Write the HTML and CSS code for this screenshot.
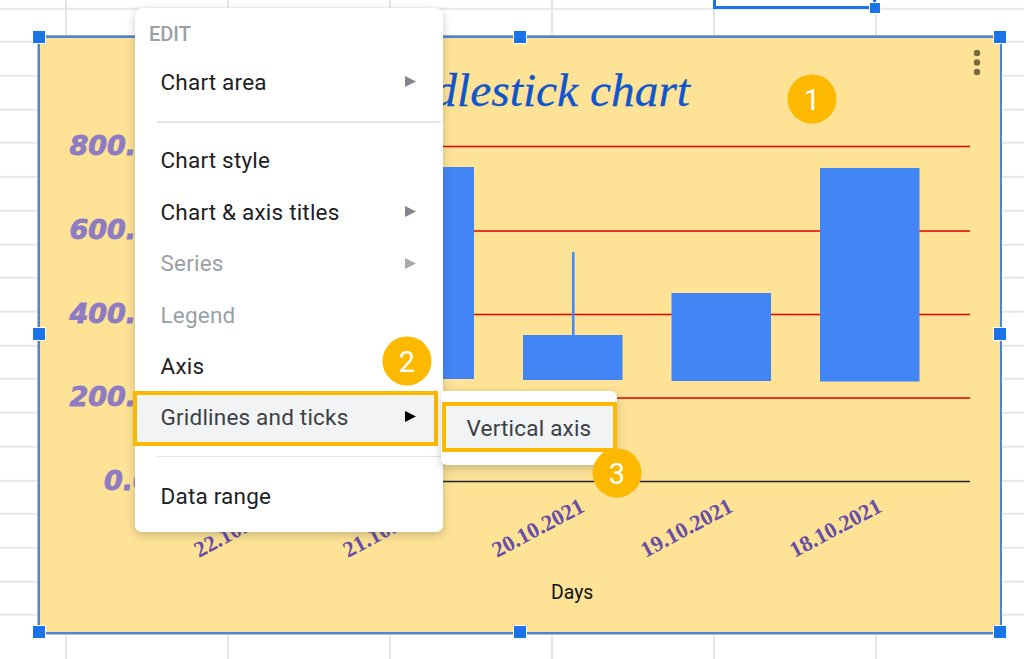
FILE: index.html
```html
<!DOCTYPE html>
<html lang="en">
<head>
<meta charset="utf-8">
<title>Candlestick chart</title>
<link rel="stylesheet" href="styles.css">
</head>
<body>
<main class="sheet">
  <div class="cell-selection"></div>
  <span class="handle cell-handle"></span>

  <section class="chart">
    <svg class="chart-svg" viewBox="38 37 962 595" width="962" height="595" aria-label="Candlestick chart">
      <text class="title" x="690" y="106" text-anchor="end">Candlestick chart</text>
      <line class="grid-red" x1="140" x2="970" y1="146.5" y2="146.5"/>
      <line class="grid-red" x1="140" x2="970" y1="231" y2="231"/>
      <line class="grid-red" x1="140" x2="970" y1="314.5" y2="314.5"/>
      <line class="grid-red" x1="140" x2="970" y1="398" y2="398"/>
      <line class="grid-black" x1="140" x2="970" y1="481.5" y2="481.5"/>
      <rect class="bar" x="374" y="167" width="100" height="212"/>
      <rect class="bar" x="523" y="335" width="99.5" height="45"/>
      <rect class="bar" x="572" y="252" width="2.5" height="84"/>
      <rect class="bar" x="671.5" y="293" width="99.5" height="88"/>
      <rect class="bar" x="820" y="168" width="99.5" height="213.5"/>
      <text class="y-label" x="69.5" y="155">800.0</text>
      <text class="y-label" x="69.5" y="239">600.0</text>
      <text class="y-label" x="69.5" y="323">400.0</text>
      <text class="y-label" x="69.5" y="406">200.0</text>
      <text class="y-label" x="104" y="490">0.0</text>
      <text class="x-label" transform="translate(199 558) rotate(-28)">22.10.2021</text>
      <text class="x-label" transform="translate(348 558) rotate(-28)">21.10.2021</text>
      <text class="x-label" transform="translate(497 558) rotate(-28)">20.10.2021</text>
      <text class="x-label" transform="translate(645.5 558) rotate(-28)">19.10.2021</text>
      <text class="x-label" transform="translate(794.5 558) rotate(-28)">18.10.2021</text>
      <text class="x-title" x="551" y="599">Days</text>
      <circle class="kebab" cx="977" cy="53" r="3.2"/>
      <circle class="kebab" cx="977" cy="62.5" r="3.2"/>
      <circle class="kebab" cx="977" cy="72" r="3.2"/>
    </svg>
  </section>

  <span class="handle h-tl"></span>
  <span class="handle h-tc"></span>
  <span class="handle h-tr"></span>
  <span class="handle h-ml"></span>
  <span class="handle h-mr"></span>
  <span class="handle h-bl"></span>
  <span class="handle h-bc"></span>
  <span class="handle h-br"></span>

  <nav class="menu">
    <div class="menu-head">EDIT</div>
    <div class="item"><span>Chart area</span>
      <svg class="arrow" viewBox="0 0 11 11" width="11" height="11"><polygon points="0,0 11,5.5 0,11"/></svg></div>
    <div class="sep"></div>
    <div class="item"><span>Chart style</span></div>
    <div class="item"><span>Chart &amp; axis titles</span>
      <svg class="arrow" viewBox="0 0 11 11" width="11" height="11"><polygon points="0,0 11,5.5 0,11"/></svg></div>
    <div class="item disabled"><span>Series</span>
      <svg class="arrow" viewBox="0 0 11 11" width="11" height="11"><polygon points="0,0 11,5.5 0,11"/></svg></div>
    <div class="item disabled"><span>Legend</span></div>
    <div class="item"><span>Axis</span></div>
    <div class="item active"><span>Gridlines and ticks</span>
      <svg class="arrow" viewBox="0 0 11 11" width="11" height="11"><polygon points="0,0 11,5.5 0,11"/></svg></div>
    <div class="sep thin"></div>
    <div class="item"><span>Data range</span></div>
  </nav>

  <nav class="submenu">
    <div class="sub-item">Vertical axis</div>
  </nav>

  <span class="badge b1">1</span>
  <span class="badge b2">2</span>
  <span class="badge b3">3</span>
</main>
</body>
</html>
```
FILE: styles.css
```css
* { box-sizing: border-box; }
html, body { margin: 0; padding: 0; }
body { width: 1024px; height: 659px; overflow: hidden; background: #fff; }

.sheet {
  position: relative;
  width: 1024px;
  height: 659px;
  background-color: #fff;
  background-image:
    repeating-linear-gradient(to right, transparent 0, transparent 160px, #e6e6e6 160px, #e6e6e6 162px),
    repeating-linear-gradient(to bottom, transparent 0, transparent 31.7px, #e6e6e6 31.7px, #e6e6e6 33.7px);
  background-position: -95px 0, 0 -24.3px;
}

.cell-selection {
  position: absolute;
  left: 713px;
  top: -4px;
  width: 163px;
  height: 13px;
  border: 3px solid #1a73e8;
}

.handle {
  position: absolute;
  width: 14px;
  height: 14px;
  background: #1a73e8;
  border: 1px solid #fff;
  transform: translate(-50%, -50%);
}
.cell-handle { left: 875px; top: 8px; width: 12px; height: 12px; }
.h-tl { left: 38.5px; top: 37px; }
.h-tc { left: 519.5px; top: 37px; }
.h-tr { left: 1000px; top: 37px; }
.h-ml { left: 38.5px; top: 334px; }
.h-mr { left: 1000px; top: 334px; }
.h-bl { left: 38.5px; top: 632px; }
.h-bc { left: 519.5px; top: 632px; }
.h-br { left: 1000px; top: 632px; }

.chart {
  position: absolute;
  left: 38px;
  top: 36px;
  width: 964px;
  height: 598px;
  background: #fee295;
  border: 2.5px solid #4a86d8;
  box-shadow: 0 -1px 0 #9aa0a6, -1px 0 0 #b9bdc2, 0 1px 0 #b9bdc2;
}
.chart-svg { position: absolute; left: -2.5px; top: -1.5px; display: block; overflow: visible; }

.title { font: italic 47.4px "Liberation Serif", serif; fill: #1155cc; stroke: #1155cc; stroke-width: 0.3px; }
.grid-red { stroke: #e00000; stroke-width: 1.3; }
.grid-black { stroke: #222; stroke-width: 1.3; }
.bar { fill: #4285f4; }
.y-label { font: italic bold 27px "DejaVu Sans", sans-serif; fill: #8e7cc3; stroke: #8e7cc3; stroke-width: 0.9px; }
.x-label { font: bold 22.4px "Liberation Serif", serif; fill: #674ea7; }
.x-title { font: 19.4px Roboto, sans-serif; fill: #111; }
.kebab { fill: #786a3f; }

.menu {
  position: absolute;
  left: 135px;
  top: 8px;
  width: 308px;
  height: 524px;
  padding-top: 14px;
  background: #fff;
  border-radius: 7px;
  box-shadow: 0 3px 10px rgba(60, 64, 67, 0.28);
  font-family: Roboto, sans-serif;
  color: #202124;
}
.menu-head {
  height: 24px;
  margin: 0 0 11.3px 14px;
  font-size: 20px;
  font-weight: 500;
  line-height: 24px;
  color: #9aa0a6;
}
.item {
  display: flex;
  align-items: center;
  justify-content: space-between;
  height: 51.4px;
  padding: 0 27px 2px 25.5px;
  font-size: 22.5px;
  letter-spacing: 0.2px;
}
.item.disabled { color: #9aa0a6; }
.arrow { display: block; fill: #80868b; margin-top: 0; }
.item.disabled .arrow { fill: #a6a9ad; }
.item.active {
  height: 55px;
  margin: -1.3px 5px 0 -2px;
  padding: 0 18px 3px 23.5px;
  background: #f1f3f4;
  border: 4px solid #fcb900;
  color: #3c4043;
}
.item.active .arrow { fill: #000; margin-top: -2px; }
.sep { height: 2px; margin: 12.5px 2px 12.5px 22px; background: #e3e4e6; }
.sep.thin { height: 1px; margin: 10px 2px 13.5px 22px; }

.submenu {
  position: absolute;
  left: 441px;
  top: 391px;
  width: 176px;
  height: 74px;
  padding-top: 11px;
  background: #fff;
  border-radius: 0 6px 6px 6px;
  box-shadow: 0 3px 10px rgba(60, 64, 67, 0.28);
  font-family: Roboto, sans-serif;
}
.sub-item {
  display: flex;
  align-items: center;
  height: 50px;
  margin-left: 1px;
  padding: 2px 0 0 20.5px;
  background: #f1f3f4;
  border: 4px solid #fcb900;
  color: #3c4043;
  font-size: 22.5px;
  letter-spacing: 0.2px;
}

.badge {
  position: absolute;
  display: flex;
  align-items: center;
  justify-content: center;
  width: 49px;
  height: 49px;
  border-radius: 50%;
  background: #fcb900;
  color: #fff;
  font: 29px Roboto, sans-serif;
  transform: translate(-50%, -50%);
}
.b1 { left: 812px; top: 99px; }
.b2 { left: 407px; top: 361px; }
.b3 { left: 617px; top: 473px; }
```
